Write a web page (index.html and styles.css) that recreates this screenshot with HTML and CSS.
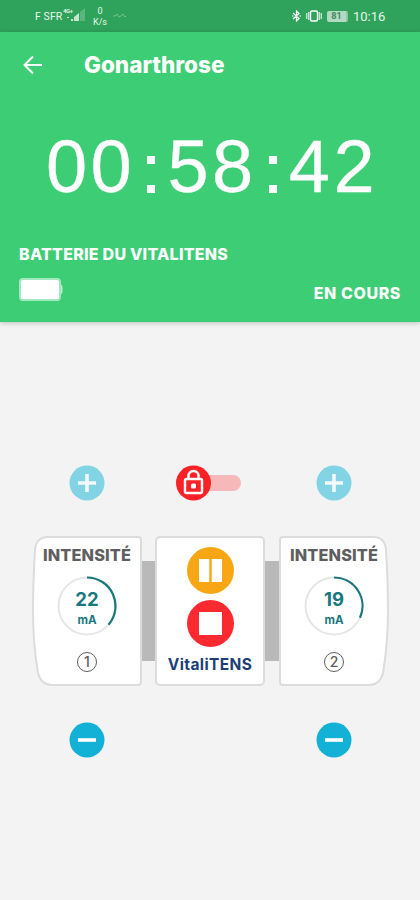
FILE: index.html
```
<!DOCTYPE html>
<html lang="fr">
<head>
<meta charset="utf-8">
<meta name="viewport" content="width=device-width, initial-scale=1">
<title>Gonarthrose</title>
<link rel="stylesheet" href="styles.css">
</head>
<body>
<div class="status">
  <span class="carrier">F SFR</span>
  <svg class="signal" width="24" height="16" viewBox="0 0 24 16" fill="#fff"><text x="0" y="6" font-size="6" font-weight="700" textLength="10">4G+</text><path d="M4 10h2v1H4zM8 12h2v2H8zM11 10l5-4v8h-5z" opacity=".85"/><path d="M17 5l5-4v13h-5z" opacity=".25"/></svg>
  <span class="speed"><span>0</span><span>K/s</span></span>
  <svg class="wave" width="14" height="8" viewBox="0 0 14 8" fill="none" stroke="#fff" stroke-width="1"><path d="M0 4h2l2-2 2 3 2-1 2-2 2 3 1-1"/></svg>
  <span class="spacer"></span>
  <svg class="bt" width="9" height="12" viewBox="0 0 9 12" fill="none" stroke="#fff" stroke-width="1.2"><path d="M1 3l6 5.5L4.5 11V1L7 3.5 1 9M0 6h1.5M7.5 6H9"/></svg>
  <svg class="vib" width="16" height="12" viewBox="0 0 16 12" fill="none" stroke="#fff" stroke-width="1.4"><rect x="4.5" y="1" width="7" height="10" rx="1.5"/><path d="M.8 3v6M2.8 2v8M13.2 2v8M15.2 3v6" stroke-width="1"/></svg>
  <span class="level">81</span>
  <span class="clock">10:16</span>
</div>
<header class="header">
  <div class="bar">
    <svg width="20" height="20" viewBox="0 0 20 20" fill="none" stroke="#fff" stroke-width="2"><path d="M19 10H2M10 1.500L1.500 10l8.500 8.500"/></svg>
    <h1>Gonarthrose</h1>
  </div>
  <div class="timer"><span>00</span><span class="colon"></span><span>58</span><span class="colon"></span><span>42</span></div>
  <div class="battery-label">BATTERIE DU VITALITENS</div>
  <div class="state">
    <svg width="44" height="24" viewBox="0 0 44 24"><rect x="1" y="2" width="40" height="21" rx="3" fill="#fff" stroke="#a2e7bd" stroke-width="2"/><path d="M42 8q1.500 0 1.500 2v5q0 2-1.500 2z" fill="#b5edcb"/></svg>
    <span>EN COURS</span>
  </div>
</header>
<main class="panel">
  <div class="row">
    <svg class="c1" width="36" height="36" viewBox="0 0 36 36"><circle cx="18" cy="18" r="17.500" fill="#82d3e3"/><path d="M9 18h18M18 9v18" stroke="#f3f8fa" stroke-width="3.600"/></svg>
    <svg class="c3 lock" width="66" height="36" viewBox="0 0 66 36"><rect x="18" y="10" width="47" height="16" rx="8" fill="#f6b8b9"/><circle cx="17.500" cy="18" r="17.500" fill="#fa2227"/><g fill="none" stroke="#fff" stroke-width="2.400"><rect x="9" y="14" width="17" height="14" rx="1.500"/><path d="M12.500 14V11a5 5 0 0 1 10 0v3"/></g><rect x="15" y="18.500" width="5" height="5" rx="1.500" fill="#fff"/></svg>
    <svg class="c5" width="36" height="36" viewBox="0 0 36 36"><circle cx="18" cy="18" r="17.500" fill="#82d3e3"/><path d="M9 18h18M18 9v18" stroke="#f3f8fa" stroke-width="3.600"/></svg>
  </div>
  <div class="device">
    <section class="card">
      <svg class="shell" width="110" height="150" viewBox="0 0 110 150"><path d="M16 1H106q3 0 3 3V146q0 3-3 3H20Q9 149 6 137Q1 107 1 75Q1 46 3 14Q4 1 16 1Z" fill="#fff" stroke="#dcdcdc" stroke-width="2"/></svg>
      <h2>INTENSITÉ</h2>
      <div class="dial">
        <svg width="60" height="60" viewBox="0 0 60 60" fill="none"><circle cx="30" cy="30" r="28.500" stroke="#e6e6e6" stroke-width="2"/><path d="M30 1.500A28.500 28.500 0 0 1 51.500 48.700" stroke="#19787d" stroke-width="2.200"/></svg>
        <b>22</b><small>mA</small>
      </div>
      <span class="num">1</span>
    </section>
    <div class="link"></div>
    <section class="card center">
      <svg width="47" height="47" viewBox="0 0 47 47"><circle cx="23.500" cy="23.500" r="23.500" fill="#f9a614"/><path d="M12 12h10.300v23H12zM24.700 12H35v23H24.700z" fill="#fff"/></svg>
      <svg width="47" height="47" viewBox="0 0 47 47"><circle cx="23.500" cy="23.500" r="23.500" fill="#fa2a30"/><path d="M12 12h23v23H12z" fill="#fff"/></svg>
      <strong>VitaliTENS</strong>
    </section>
    <div class="link"></div>
    <section class="card">
      <svg class="shell flip" width="110" height="150" viewBox="0 0 110 150"><path d="M16 1H106q3 0 3 3V146q0 3-3 3H20Q9 149 6 137Q1 107 1 75Q1 46 3 14Q4 1 16 1Z" fill="#fff" stroke="#dcdcdc" stroke-width="2"/></svg>
      <h2>INTENSITÉ</h2>
      <div class="dial">
        <svg width="60" height="60" viewBox="0 0 60 60" fill="none"><circle cx="30" cy="30" r="28.500" stroke="#e6e6e6" stroke-width="2"/><path d="M30 1.500A28.500 28.500 0 0 1 56 41.700" stroke="#19787d" stroke-width="2.200"/></svg>
        <b>19</b><small>mA</small>
      </div>
      <span class="num">2</span>
    </section>
  </div>
  <div class="row">
    <svg class="c1" width="36" height="36" viewBox="0 0 36 36"><circle cx="18" cy="18" r="17.500" fill="#14b1d6"/><path d="M9 18h18" stroke="#fff" stroke-width="3.600"/></svg>
    <svg class="c5" width="36" height="36" viewBox="0 0 36 36"><circle cx="18" cy="18" r="17.500" fill="#14b1d6"/><path d="M9 18h18" stroke="#fff" stroke-width="3.600"/></svg>
  </div>
</main>
</body>
</html>
```
FILE: styles.css
```
* { box-sizing: border-box; }
body { margin: 0; height: 900px; overflow: hidden; background: #f3f3f3; font-family: Inter, "Liberation Sans", sans-serif; display: flex; flex-direction: column; }
svg { display: block; flex: none; }
.status { height: 32px; flex: none; background: #2fa35b; color: #e6f7ec; display: flex; align-items: center; padding: 0 34px 0 35px; font-family: Roboto, sans-serif; }
.carrier { font-size: 10.5px; width: 28px; white-space: nowrap; letter-spacing: .1px; }
.signal { margin-top: -2px; opacity: .85; }
.speed { display: flex; flex-direction: column; align-items: center; width: 16px; margin-left: 5px; font-size: 9px; line-height: 11px; padding-top: 2px; }
.wave { margin-left: 5px; opacity: .35; }
.spacer { flex: 1; }
.bt { margin-right: 5px; }
.vib { margin-right: 5px; }
.level { width: 21px; height: 11px; border-radius: 2px; background: #b2d9c1; color: #438a5c; font-size: 9px; font-weight: 700; line-height: 11px; text-align: center; border-right: 2px solid #8bc9a3; margin-right: 5px; }
.clock { font-size: 13px; width: 33px; white-space: nowrap; }
.header { height: 290px; flex: none; background: #3dcd74; color: #fff; box-shadow: 0 1px 5px rgba(0,0,0,.22); padding: 0 19px; display: flex; flex-direction: column; }
.bar { height: 65px; display: flex; align-items: center; padding-left: 4px; gap: 41px; }
h1 { margin: 0; font-size: 22.500px; font-weight: 800; }
.timer { height: 80px; margin-top: 30px; padding-left: 4px; display: flex; justify-content: center; align-items: center; font-family: "Liberation Sans", sans-serif; font-size: 74px; line-height: 80px; letter-spacing: 3.400px; -webkit-text-stroke: .3px #fff; }
.colon { width: 8px; height: 37px; margin: 14px 12.300px 0 12px; border-top: 8px solid #fff; border-bottom: 8px solid #fff; }
.battery-label { font-size: 16px; font-weight: 800; letter-spacing: .25px; line-height: 20px; margin-top: 37px; white-space: nowrap; }
.state { display: flex; justify-content: space-between; margin-top: 13px; font-size: 16px; font-weight: 800; letter-spacing: .6px; line-height: 32px; }
.panel { padding: 143px 31px 0 32px; }
.row, .device { display: grid; grid-template-columns: 110px 13px 110px 14px 110px; }
.row { justify-items: center; height: 36px; }
.c1 { grid-column: 1; }
.c3 { grid-column: 3; }
.c5 { grid-column: 5; }
.lock { margin-right: 3px; }
.device { height: 150px; margin: 35px 0 36px; }
.card { position: relative; display: flex; flex-direction: column; align-items: center; }
.shell { position: absolute; inset: 0; }
.flip { transform: scaleX(-1); }
h2 { position: relative; margin: 8px 0 0; color: #5e5e60; font-size: 16.300px; letter-spacing: .15px; line-height: 22px; font-weight: 800; }
.dial { position: relative; margin-top: 10px; width: 60px; height: 60px; display: flex; flex-direction: column; align-items: center; color: #19787d; }
.dial svg { position: absolute; inset: 0; }
.dial b { font-size: 18.500px; line-height: 22px; margin-top: 12px; }
.dial small { font-size: 11.500px; font-weight: 700; line-height: 14px; margin-top: 3px; }
.num { position: relative; width: 20px; height: 20px; margin-top: 16px; border: 1.500px solid #5e5e60; border-radius: 50%; color: #5e5e60; font-size: 14px; line-height: 18px; font-weight: 500; text-align: center; }
.link { height: 100px; margin: 25px -1px 0; background: #b9b9b9; }
.center { background: #fff; border: 2px solid #dcdcdc; border-radius: 5px; padding-top: 9px; gap: 6px; }
.center strong { font-size: 15.500px; letter-spacing: .4px; line-height: 22px; color: #1c3f79; margin-top: 1px; }
```
